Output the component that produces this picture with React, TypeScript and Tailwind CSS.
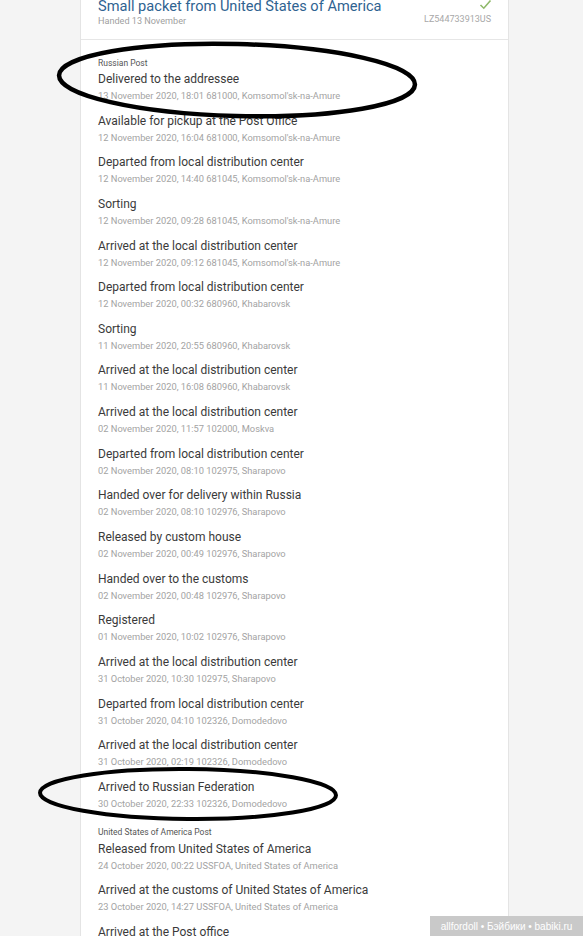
const russian = [
  ['Delivered to the addressee', '13 November 2020, 18:01 681000, Komsomol\'sk-na-Amure'],
  ['Available for pickup at the Post Office', '12 November 2020, 16:04 681000, Komsomol\'sk-na-Amure'],
  ['Departed from local distribution center', '12 November 2020, 14:40 681045, Komsomol\'sk-na-Amure'],
  ['Sorting', '12 November 2020, 09:28 681045, Komsomol\'sk-na-Amure'],
  ['Arrived at the local distribution center', '12 November 2020, 09:12 681045, Komsomol\'sk-na-Amure'],
  ['Departed from local distribution center', '12 November 2020, 00:32 680960, Khabarovsk'],
  ['Sorting', '11 November 2020, 20:55 680960, Khabarovsk'],
  ['Arrived at the local distribution center', '11 November 2020, 16:08 680960, Khabarovsk'],
  ['Arrived at the local distribution center', '02 November 2020, 11:57 102000, Moskva'],
  ['Departed from local distribution center', '02 November 2020, 08:10 102975, Sharapovo'],
  ['Handed over for delivery within Russia', '02 November 2020, 08:10 102976, Sharapovo'],
  ['Released by custom house', '02 November 2020, 00:49 102976, Sharapovo'],
  ['Handed over to the customs', '02 November 2020, 00:48 102976, Sharapovo'],
  ['Registered', '01 November 2020, 10:02 102976, Sharapovo'],
  ['Arrived at the local distribution center', '31 October 2020, 10:30 102975, Sharapovo'],
  ['Departed from local distribution center', '31 October 2020, 04:10 102326, Domodedovo'],
  ['Arrived at the local distribution center', '31 October 2020, 02:19 102326, Domodedovo'],
  ['Arrived to Russian Federation', '30 October 2020, 22:33 102326, Domodedovo'],
]

const usa = [
  ['Released from United States of America', '24 October 2020, 00:22 USSFOA, United States of America'],
  ['Arrived at the customs of United States of America', '23 October 2020, 14:27 USSFOA, United States of America'],
  ['Arrived at the Post office', '22 October 2020, 09:15 USSFOA, United States of America'],
]

function Row({ title, sub }: { title: string; sub: string }) {
  return (
    <div className="flex h-[41.65px] flex-col">
      <div className="text-[12px] leading-[16px] text-[#3a3a3a]">{title}</div>
      <div className="mt-[2px] text-[9.3px] leading-[14px] text-[#a3a3a3]">{sub}</div>
    </div>
  )
}

export default function App() {
  return (
    <div className="relative h-[936px] w-[583px] overflow-hidden bg-[#f4f4f4] font-['Roboto',sans-serif]">
      <div className="ml-[80px] w-[429px] border-x border-[#e4e4e4] bg-white">
        <div className="-mt-[2px] flex h-[42px] items-start justify-between border-b border-[#e6e6e6] px-[17px]">
          <div>
            <div className="text-[14.6px] leading-[17px] text-[#2f6391]">Small packet from United States of America</div>
            <div className="text-[9.1px] leading-[12px] text-[#a0a0a0]">Handed 13 November</div>
          </div>
          <div className="flex flex-col items-end">
            <svg width="13" height="11" viewBox="0 0 13 11" className="mr-[-1px] mt-[1px]">
              <path d="M1.5 6 L4.8 9.2 L11.5 1.5" fill="none" stroke="#8fb96a" strokeWidth="1.6" />
            </svg>
            <div className="mt-[3px] text-[9px] leading-[12px] text-[#a8a8a8]">LZ544733913US</div>
          </div>
        </div>
        <div className="px-[17px] pt-[15px]">
          <div className="text-[8.5px] leading-[16px] text-[#555]">Russian Post</div>
          {russian.map(([t, s], i) => (
            <Row key={i} title={t} sub={s} />
          ))}
          <div className="mt-[3px] text-[8.5px] leading-[17px] text-[#555]">United States of America Post</div>
          {usa.map(([t, s], i) => (
            <Row key={i} title={t} sub={s} />
          ))}
        </div>
      </div>

      <svg className="pointer-events-none absolute left-0 top-0" width="583" height="936">
        <ellipse cx="237" cy="80" rx="178" ry="36" fill="none" stroke="#000" strokeWidth="4.5" transform="rotate(1.5 237 80)" />
        <ellipse cx="188" cy="794" rx="148" ry="25" fill="none" stroke="#000" strokeWidth="4" transform="rotate(0.5 188 794)" />
      </svg>

      <div className="absolute bottom-0 right-0 flex h-[20px] w-[153px] items-center justify-center bg-[#c9c9c9] text-[10px] text-white font-['Liberation_Sans',sans-serif]">
        allfordoll • Бэйбики • babiki.ru
      </div>
    </div>
  )
}
